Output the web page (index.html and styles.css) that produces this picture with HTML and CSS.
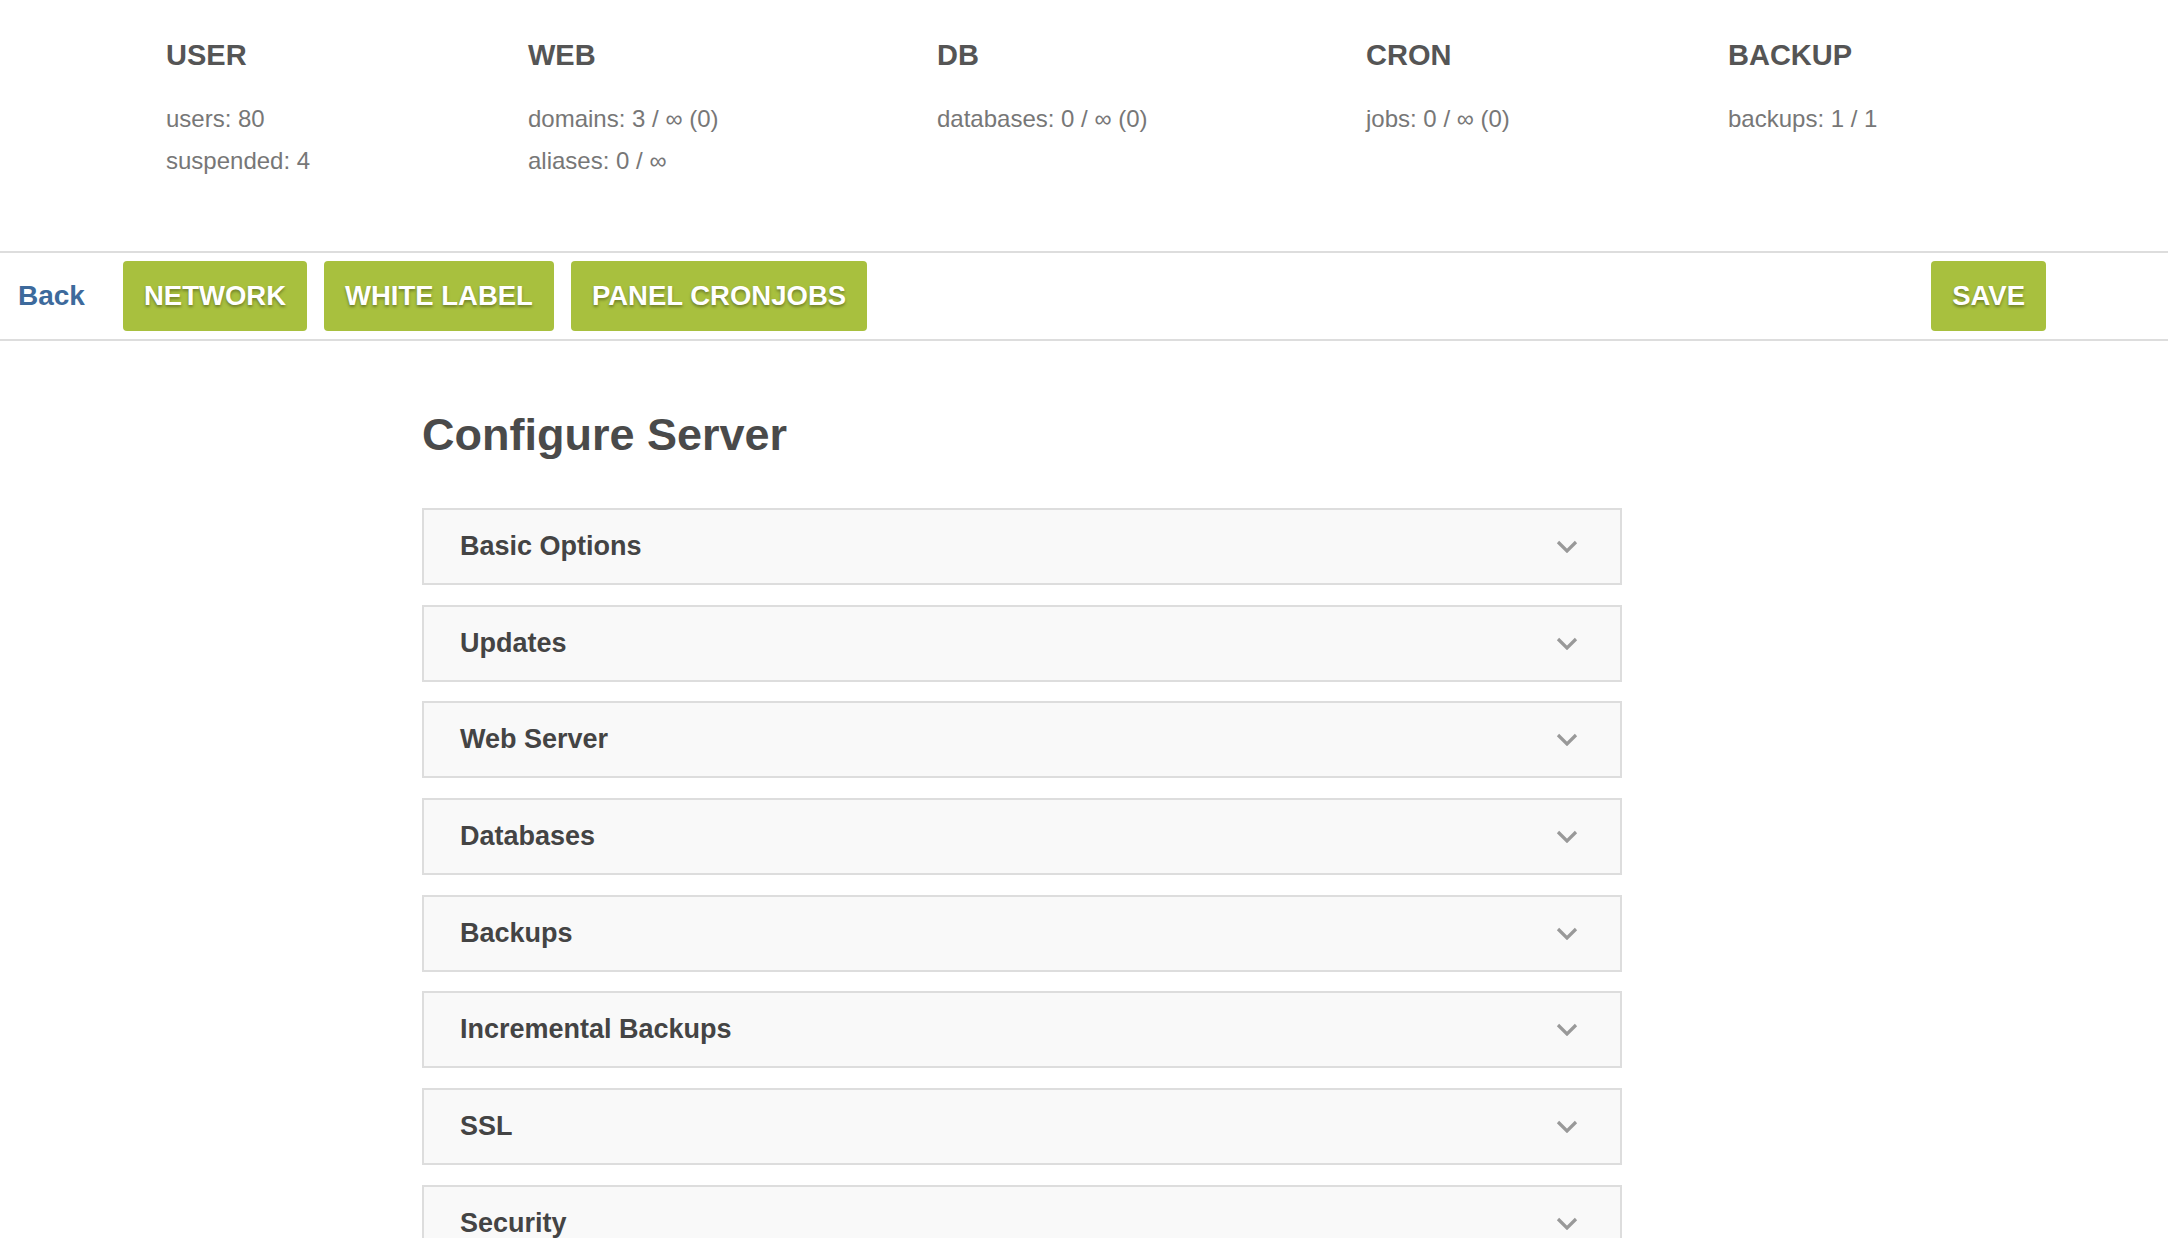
FILE: index.html
```html
<!DOCTYPE html>
<html lang="en">
<head>
    <meta charset="UTF-8">
    <meta name="viewport" content="width=device-width, initial-scale=1.0">
    <title>Configure Server</title>
    <link rel="stylesheet" href="styles.css">
</head>
<body>
    <div class="stats">
        <div class="stat-col">
            <h3>USER</h3>
            <ul>
                <li>users: 80</li>
                <li>suspended: 4</li>
            </ul>
        </div>
        <div class="stat-col">
            <h3>WEB</h3>
            <ul>
                <li>domains: 3 / ∞ (0)</li>
                <li>aliases: 0 / ∞</li>
            </ul>
        </div>
        <div class="stat-col">
            <h3>DB</h3>
            <ul>
                <li>databases: 0 / ∞ (0)</li>
            </ul>
        </div>
        <div class="stat-col">
            <h3>CRON</h3>
            <ul>
                <li>jobs: 0 / ∞ (0)</li>
            </ul>
        </div>
        <div class="stat-col">
            <h3>BACKUP</h3>
            <ul>
                <li>backups: 1 / 1</li>
            </ul>
        </div>
    </div>

    <div class="toolbar">
        <a href="#" class="back-link">Back</a>
        <div class="btn-group">
            <a href="#" class="btn">NETWORK</a>
            <a href="#" class="btn">WHITE LABEL</a>
            <a href="#" class="btn">PANEL CRONJOBS</a>
        </div>
        <a href="#" class="btn btn-save">SAVE</a>
    </div>

    <div class="content">
        <h1>Configure Server</h1>

        <div class="section">
            <span class="section-title">Basic Options</span>
            <svg class="chevron" viewBox="0 0 22 13"><polyline points="2,2 11,11 20,2"/></svg>
        </div>
        <div class="section">
            <span class="section-title">Updates</span>
            <svg class="chevron" viewBox="0 0 22 13"><polyline points="2,2 11,11 20,2"/></svg>
        </div>
        <div class="section">
            <span class="section-title">Web Server</span>
            <svg class="chevron" viewBox="0 0 22 13"><polyline points="2,2 11,11 20,2"/></svg>
        </div>
        <div class="section">
            <span class="section-title">Databases</span>
            <svg class="chevron" viewBox="0 0 22 13"><polyline points="2,2 11,11 20,2"/></svg>
        </div>
        <div class="section">
            <span class="section-title">Backups</span>
            <svg class="chevron" viewBox="0 0 22 13"><polyline points="2,2 11,11 20,2"/></svg>
        </div>
        <div class="section">
            <span class="section-title">Incremental Backups</span>
            <svg class="chevron" viewBox="0 0 22 13"><polyline points="2,2 11,11 20,2"/></svg>
        </div>
        <div class="section">
            <span class="section-title">SSL</span>
            <svg class="chevron" viewBox="0 0 22 13"><polyline points="2,2 11,11 20,2"/></svg>
        </div>
        <div class="section">
            <span class="section-title">Security</span>
            <svg class="chevron" viewBox="0 0 22 13"><polyline points="2,2 11,11 20,2"/></svg>
        </div>
    </div>
</body>
</html>
```

FILE: styles.css
```css
:root {
    --green: #a8c03e;
    --blue: #3d6a9c;
    --line: #dddddd;
}

* {
    margin: 0;
    padding: 0;
    box-sizing: border-box;
}

body {
    font-family: "Liberation Sans", Arial, sans-serif;
    background: #fff;
    color: #555;
}

/* top stats */
.stats {
    display: grid;
    grid-template-columns: 362px 409px 429px 362px auto;
    height: 251px;
    padding: 39px 0 0 166px;
}

.stat-col h3 {
    font-size: 29px;
    line-height: 32px;
    font-weight: bold;
    color: #555;
    margin-bottom: 27px;
}

.stat-col ul {
    list-style: none;
}

.stat-col li {
    font-size: 24px;
    line-height: 42px;
    color: #777;
}

/* toolbar */
.toolbar {
    display: flex;
    align-items: center;
    border-top: 2px solid var(--line);
    border-bottom: 2px solid var(--line);
    padding: 8px 122px 8px 18px;
}

.back-link {
    font-size: 28px;
    font-weight: bold;
    color: var(--blue);
    text-decoration: none;
    margin-right: 38px;
}

.btn-group {
    display: flex;
    gap: 17px;
}

.btn {
    display: flex;
    align-items: center;
    height: 70px;
    padding: 0 21px;
    background: var(--green);
    border-radius: 4px;
    color: #fff;
    font-size: 27.5px;
    font-weight: bold;
    text-decoration: none;
    text-shadow: 0 2px 3px rgba(0, 0, 0, 0.35);
}

.btn-save {
    margin-left: auto;
}

/* main */
.content {
    width: 1200px;
    margin-left: 422px;
    padding-top: 69px;
}

h1 {
    font-size: 45px;
    line-height: 50px;
    font-weight: bold;
    color: #4a4a4a;
    margin-bottom: 48px;
}

.section {
    display: flex;
    align-items: center;
    justify-content: space-between;
    height: 77px;
    padding: 0 42px 0 36px;
    margin-bottom: 19.7px;
    background: #f9f9f9;
    border: 2px solid var(--line);
}

.section-title {
    font-size: 27px;
    font-weight: bold;
    color: #444;
}

.chevron {
    width: 22px;
    height: 13px;
    fill: none;
    stroke: #999;
    stroke-width: 3.2;
}
```
